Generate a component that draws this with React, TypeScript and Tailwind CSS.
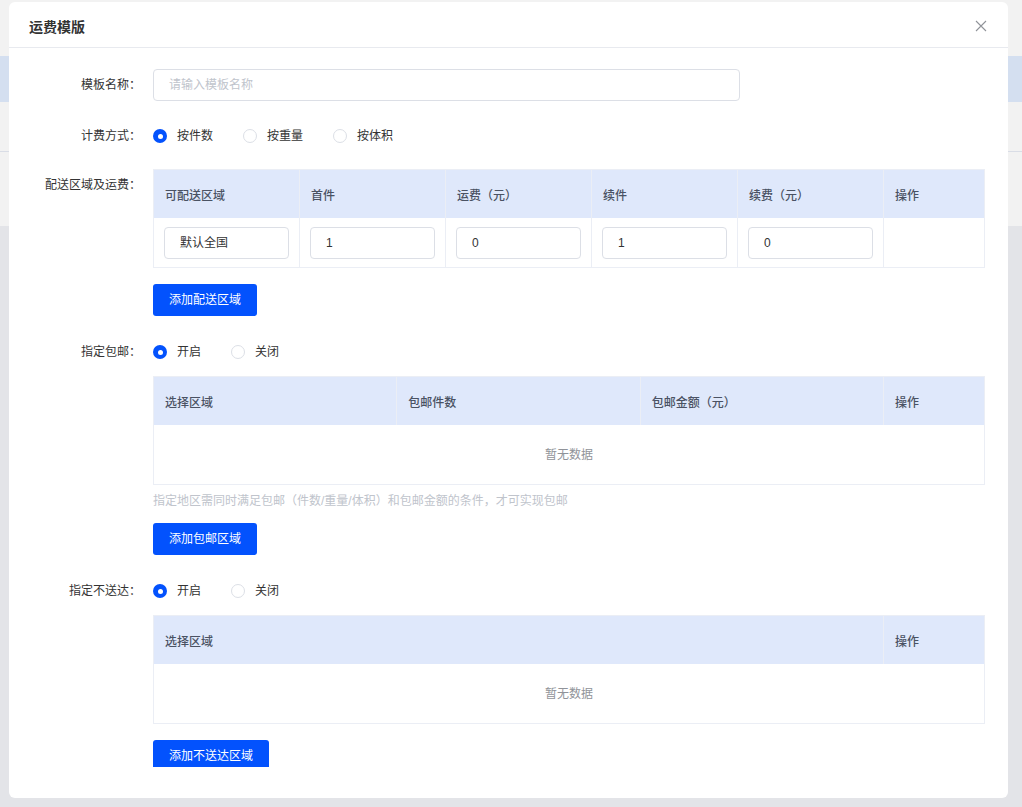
import React from 'react';

type Col = { title: string; input?: string };

const Radio: React.FC<{ label: string; checked?: boolean }> = ({ label, checked }) => (
  <label className="flex items-center mr-[30px] cursor-pointer">
    {checked ? (
      <span className="w-[14px] h-[14px] rounded-full bg-[#0352fd] flex items-center justify-center">
        <span className="w-[5px] h-[5px] rounded-full bg-white" />
      </span>
    ) : (
      <span className="w-[14px] h-[14px] rounded-full border border-[#dcdfe6] bg-white" />
    )}
    <span className="ml-[10px] text-[12px] text-[#333]">{label}</span>
  </label>
);

const FormItem: React.FC<{ label: string; className?: string; children: React.ReactNode }> = ({ label, className, children }) => (
  <div className={'flex ' + (className || '')}>
    <div className="w-[132px] shrink-0 text-right text-[12px] leading-[32px] text-[#333]">{label}：</div>
    <div className="ml-[12px] flex-1 min-w-0">{children}</div>
  </div>
);

const AddButton: React.FC<{ text: string }> = ({ text }) => (
  <button className="h-[32px] px-[16px] rounded-[3px] bg-[#0352fd] text-white text-[12px]">{text}</button>
);

const Table: React.FC<{ cols: string[]; grid: string; row?: React.ReactNode }> = ({ cols, grid, row }) => (
  <div className="border border-[#ebeef5] w-[832px]">
    <div className={'grid bg-[#dfe8fb] ' + grid}>
      {cols.map((c, i) => (
        <div
          key={c}
          className={
            'h-[48px] flex items-center pt-[3px] pl-[11px] text-[12px] font-medium text-[#4a5263] ' +
            (i < cols.length - 1 ? 'border-r border-[#ebeef5]' : '')
          }
        >
          {c}
        </div>
      ))}
    </div>
    {row || (
      <div className="h-[59px] flex items-center justify-center text-[12px] text-[#909399]">暂无数据</div>
    )}
  </div>
);

const feeCols: Col[] = [
  { title: '可配送区域', input: '默认全国' },
  { title: '首件', input: '1' },
  { title: '运费（元）', input: '0' },
  { title: '续件', input: '1' },
  { title: '续费（元）', input: '0' },
  { title: '操作' },
];

const App: React.FC = () => {
  const feeRow = (
    <div className="grid grid-cols-[1fr_1fr_1fr_1fr_1fr_100px]">
      {feeCols.map((c, i) => (
        <div
          key={c.title}
          className={'h-[49px] flex items-center px-[10px] ' + (i < feeCols.length - 1 ? 'border-r border-[#ebeef5]' : '')}
        >
          {c.input && (
            <div className="w-full h-[32px] border border-[#dcdfe6] rounded-[4px] px-[15px] flex items-center text-[12px] text-[#333]">
              {c.input}
            </div>
          )}
        </div>
      ))}
    </div>
  );

  return (
    <div className="relative w-full h-[807px] overflow-hidden font-['Liberation_Sans','Noto_Sans_CJK_SC',sans-serif]">
      {/* page behind the dialog */}
      <div className="flex flex-col h-full">
        <div className="h-[56px] bg-[#f2f2f2]" />
        <div className="h-[46px] bg-[#d4dff0]" />
        <div className="h-[50px] bg-[#f2f2f2] border-b border-[#d9dde6]" />
        <div className="h-[74px] bg-[#f2f2f2]" />
        <div className="flex-1 bg-[#e3e4e8]" />
      </div>

      {/* dialog */}
      <div className="absolute left-[9px] top-[2px] w-[999px] h-[796px] bg-white rounded-[6px] flex flex-col">
        <div className="h-[46px] shrink-0 border-b border-[#e8eaef] flex items-center justify-between pl-[20px] pr-[21px] pt-[5px]">
          <span className="text-[14px] font-semibold text-[#333]">运费模版</span>
          <svg width="12" height="12" viewBox="0 0 12 12" className="mb-[3px]">
            <path d="M1 1L11 11M11 1L1 11" stroke="#909399" strokeWidth="1.1" fill="none" />
          </svg>
        </div>

        <div className="h-[719px] overflow-hidden pt-[21px]">
          <FormItem label="模板名称">
            <div className="w-[587px] h-[32px] border border-[#dcdfe6] rounded-[4px] px-[15px] flex items-center text-[12px] text-[#c0c4cc]">
              请输入模板名称
            </div>
          </FormItem>

          <FormItem label="计费方式" className="mt-[19px]">
            <div className="h-[32px] flex items-center">
              <Radio label="按件数" checked />
              <Radio label="按重量" />
              <Radio label="按体积" />
            </div>
          </FormItem>

          <FormItem label="配送区域及运费" className="mt-[17px]">
            <Table cols={feeCols.map(c => c.title)} grid="grid-cols-[1fr_1fr_1fr_1fr_1fr_100px]" row={feeRow} />
            <div className="mt-[16px]">
              <AddButton text="添加配送区域" />
            </div>
          </FormItem>

          <FormItem label="指定包邮" className="mt-[20px]">
            <div className="h-[32px] flex items-center">
              <Radio label="开启" checked />
              <Radio label="关闭" />
            </div>
            <div className="mt-[8px]">
              <Table cols={['选择区域', '包邮件数', '包邮金额（元）', '操作']} grid="grid-cols-[1fr_1fr_1fr_100px]" />
            </div>
            <div className="mt-[7px] text-[12px] leading-[18px] text-[#c0c4cc]">
              指定地区需同时满足包邮（件数/重量/体积）和包邮金额的条件，才可实现包邮
            </div>
            <div className="mt-[13px]">
              <AddButton text="添加包邮区域" />
            </div>
          </FormItem>

          <FormItem label="指定不送达" className="mt-[20px]">
            <div className="h-[32px] flex items-center">
              <Radio label="开启" checked />
              <Radio label="关闭" />
            </div>
            <div className="mt-[8px]">
              <Table cols={['选择区域', '操作']} grid="grid-cols-[1fr_100px]" />
            </div>
            <div className="mt-[16px]">
              <AddButton text="添加不送达区域" />
            </div>
          </FormItem>
        </div>
      </div>
    </div>
  );
};

export default App;
